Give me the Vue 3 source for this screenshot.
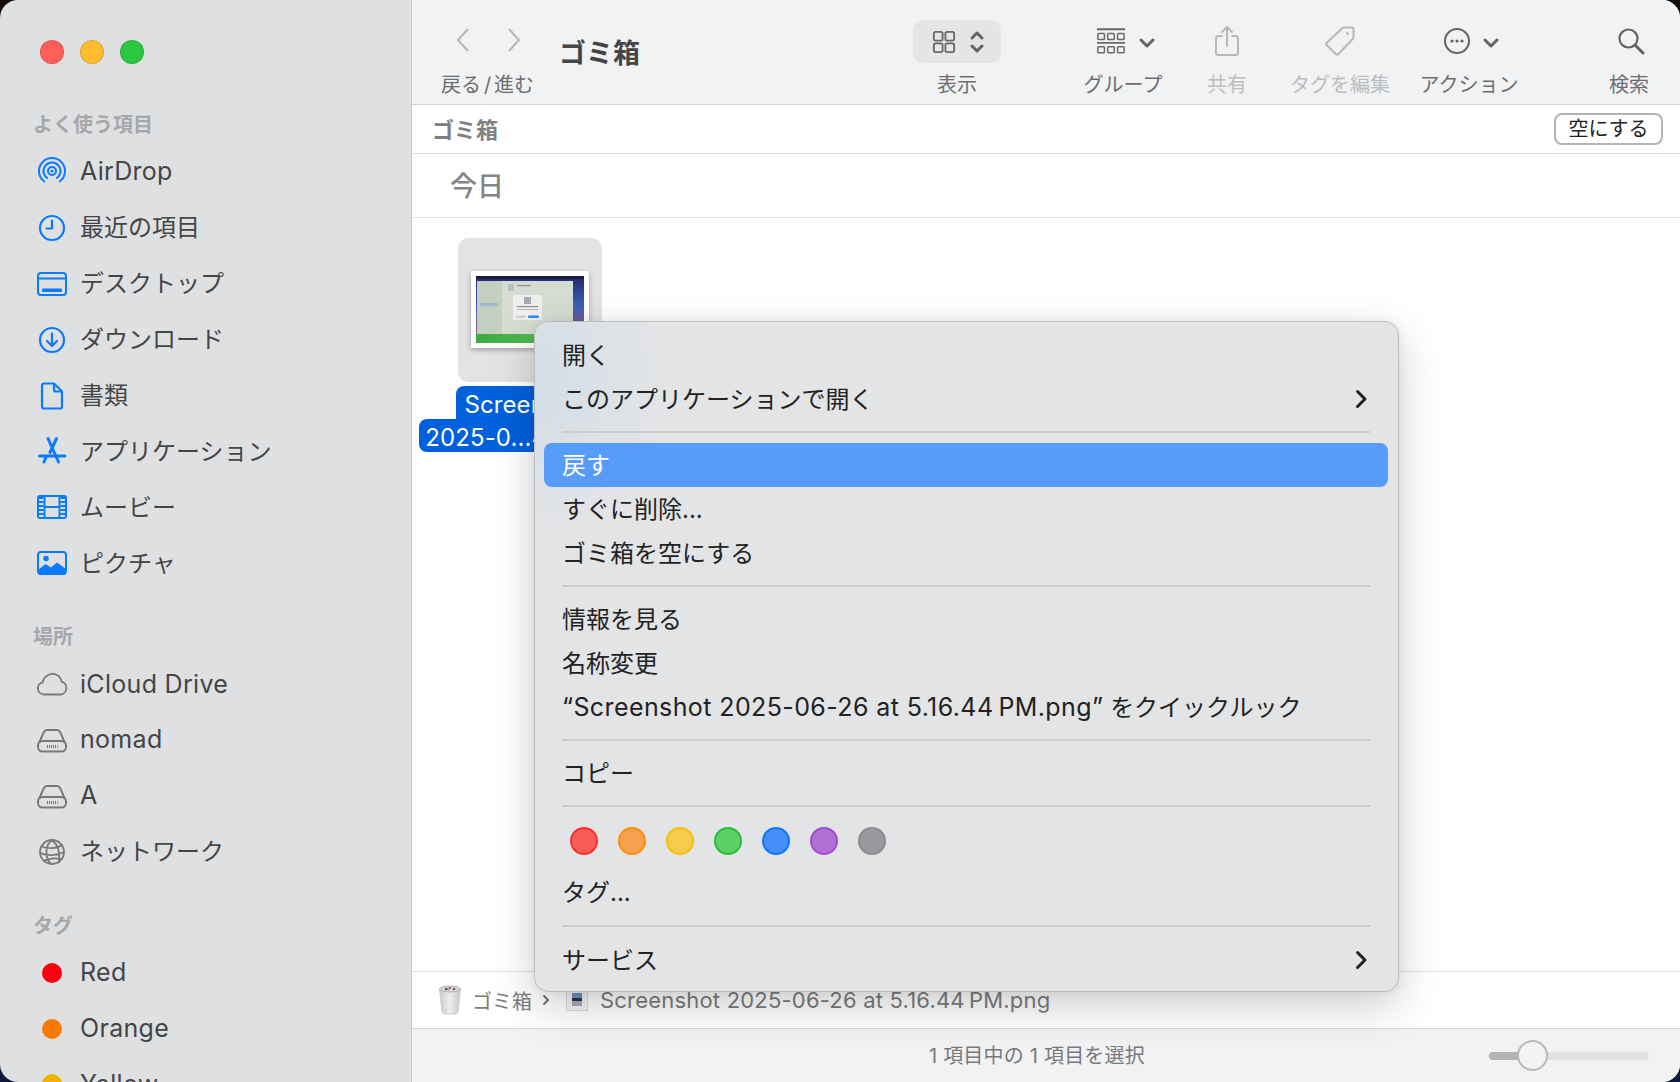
<script setup>
const blue = '#0a7aff'
const grey = '#77787a'
const line = (c, w = 2) => `fill="none" stroke="${c}" stroke-width="${w}" stroke-linecap="round" stroke-linejoin="round"`

const favourites = [
  { label: 'AirDrop', lat: true, svg: `<g ${line(blue)}><path d="M8.3 25.5A13 13 0 1 1 23.7 25.5"/><path d="M11.2 22A8.5 8.5 0 1 1 20.8 22"/><circle cx="16" cy="15" r="4"/></g><circle cx="16" cy="15" r="1.6" fill="${blue}"/>` },
  { label: '最近の項目', svg: `<g ${line(blue, 2.2)}><circle cx="16" cy="16" r="12"/><path d="M16 8.5V16.5H10.5"/></g>` },
  { label: 'デスクトップ', svg: `<g ${line(blue)}><rect x="2" y="5" width="28" height="22" rx="3"/><path d="M2 10.5H30"/></g><rect x="6" y="20.5" width="20" height="3.5" rx="1" fill="${blue}"/>` },
  { label: 'ダウンロード', svg: `<g ${line(blue, 2.2)}><circle cx="16" cy="16" r="12"/><path d="M16 9.5V22M11 17L16 22L21 17"/></g>` },
  { label: '書類', svg: `<path ${line(blue, 2.2)} d="M8 3.5H18L26 11.5V26.5A2 2 0 0 1 24 28.5H8A2 2 0 0 1 6 26.5V5.5A2 2 0 0 1 8 3.5ZM18 3.5V9.5A2 2 0 0 0 20 11.5H26"/>` },
  { label: 'アプリケーション', svg: `<g ${line(blue, 3)}><path d="M12 3.5L22.5 27M20.5 3.5L14 17.5M3.5 21H29M10.5 21L8 27"/></g>` },
  { label: 'ムービー', svg: `<g ${line(blue)}><rect x="2" y="5" width="28" height="22" rx="2"/><path d="M8.5 5V27M23.5 5V27M8.5 16H23.5"/></g><g fill="none" stroke="${blue}" stroke-width="5" stroke-dasharray="2 2"><path d="M5 6V26M27 6V26"/></g>` },
  { label: 'ピクチャ', svg: `<rect x="2" y="5" width="28" height="22" rx="3" ${line(blue)}/><path fill="${blue}" d="M2 23L9.5 17L15 20.5L21 15.5L30 22V25A3 3 0 0 1 27 28H5A3 3 0 0 1 2 25Z"/><circle cx="10" cy="11.5" r="2.8" fill="${blue}"/>` }
]

const drive = `<g ${line(grey)}><path d="M3.5 18L7.8 8.2A3.5 3.5 0 0 1 11 6H21A3.5 3.5 0 0 1 24.2 8.2L28.5 18"/><rect x="2" y="17" width="28" height="10.5" rx="4.5"/></g><path d="M11 22.5H21.5" stroke="${grey}" stroke-width="3" stroke-dasharray="1 1" fill="none"/>`
const places = [
  { label: 'iCloud Drive', lat: true, svg: `<path ${line(grey, 1.8)} d="M8 26.5A6.2 6.2 0 0 1 6.5 14.3C7.6 9.8 11.6 5.8 16.5 5.8C21 5.8 24.6 9 25.6 13.6A6.6 6.6 0 0 1 24.5 26.5Z"/>` },
  { label: 'nomad', lat: true, svg: drive },
  { label: 'A', lat: true, svg: drive },
  { label: 'ネットワーク', svg: `<g ${line(grey, 1.8)}><circle cx="16" cy="16" r="12"/><path d="M16 4C9 9 8.5 21 15 28M16 4C22 9 24 15 23 26.5M5.5 10.5C12 13 21 13 26 9M4 17C11 20 21 20 28 16M8 25C13 22 20 22 26 23"/></g>` }
]
const tags = [
  { label: 'Red', color: '#fe0012' },
  { label: 'Orange', color: '#f97a00' },
  { label: 'Yellow', color: '#efb400' }
]

const menuGroups = [
  [{ t: '開く' }, { t: 'このアプリケーションで開く', sub: true }],
  [{ t: '戻す', active: true }, { t: 'すぐに削除...' }, { t: 'ゴミ箱を空にする' }],
  [{ t: '情報を見る' }, { t: '名称変更' }, { lat: '“Screenshot 2025-06-26 at 5.16.44\u2009PM.png”', t: ' をクイックルック' }],
  [{ t: 'コピー' }]
]
const dots = [
  ['#fb5c59', '#f53331'], ['#f9a04e', '#f98e12'], ['#f6cc4e', '#f7be0a'], ['#5dd065', '#26bf3c'],
  ['#478efb', '#0e76fb'], ['#b06fd4', '#a24fc9'], ['#9a9a9e', '#8b8b8f']
]
</script>

<template>
  <div class="desk">
    <div class="window">
      <aside class="sidebar">
        <div class="lights">
          <span class="light red"></span>
          <span class="light yellow"></span>
          <span class="light green"></span>
        </div>
        <div class="sec-title first">よく使う項目</div>
        <div v-for="r in favourites" :key="r.label" class="row">
          <svg class="row-icon" viewBox="0 0 32 32" v-html="r.svg"></svg>
          <span :class="r.lat ? 'lat' : 'cjk'">{{ r.label }}</span>
        </div>
        <div class="sec-title">場所</div>
        <div v-for="r in places" :key="r.label" class="row">
          <svg class="row-icon" viewBox="0 0 32 32" v-html="r.svg"></svg>
          <span :class="r.lat ? 'lat' : 'cjk'">{{ r.label }}</span>
        </div>
        <div class="sec-title">タグ</div>
        <div v-for="r in tags" :key="r.label" class="row">
          <span class="row-icon tag-wrap"><i class="tag-dot" :style="{ background: r.color }"></i></span>
          <span class="lat">{{ r.label }}</span>
        </div>
      </aside>

      <main class="main">
        <header class="toolbar">
          <div class="tool nav">
            <div class="tool-icon nav-icons">
              <svg width="18" height="28" viewBox="0 0 18 28"><path d="M14 3L4 14L14 25" fill="none" stroke="#b4b5b7" stroke-width="2"/></svg>
              <svg width="18" height="28" viewBox="0 0 18 28"><path d="M4 3L14 14L4 25" fill="none" stroke="#b4b5b7" stroke-width="2"/></svg>
            </div>
            <div class="tool-label nav-label">戻る / 進む</div>
          </div>
          <div class="title">ゴミ箱</div>

          <div class="tool view">
            <div class="tool-icon">
              <div class="view-pill">
                <svg width="24" height="24" viewBox="0 0 26 26" fill="none" stroke="#69696b" stroke-width="2">
                  <rect x="2" y="2" width="9.5" height="9.5" rx="2"/><rect x="14.5" y="2" width="9.5" height="9.5" rx="2"/>
                  <rect x="2" y="14.5" width="9.5" height="9.5" rx="2"/><rect x="14.5" y="14.5" width="9.5" height="9.5" rx="2"/>
                </svg>
                <svg width="16" height="24" viewBox="0 0 16 24" fill="none" stroke="#636365" stroke-width="3" stroke-linecap="round" stroke-linejoin="round">
                  <path d="M3 8L8 3L13 8M3 16L8 21L13 16"/>
                </svg>
              </div>
            </div>
            <div class="tool-label">表示</div>
          </div>

          <div class="tool group">
            <div class="tool-icon with-chev">
              <svg width="30" height="28" viewBox="0 0 32 28" fill="none" stroke="#69696b" stroke-width="1.6">
                <path d="M1 1.5H31M1 16H31" stroke-width="2"/>
                <rect x="2" y="6" width="7" height="6.5" rx="1"/><rect x="12.5" y="6" width="7" height="6.5" rx="1"/><rect x="23" y="6" width="7" height="6.5" rx="1"/>
                <rect x="2" y="20" width="7" height="6.5" rx="1"/><rect x="12.5" y="20" width="7" height="6.5" rx="1"/><rect x="23" y="20" width="7" height="6.5" rx="1"/>
              </svg>
              <svg class="chev" width="16" height="10" viewBox="0 0 16 10"><path d="M2 2L8 8L14 2" fill="none" stroke="#636365" stroke-width="3" stroke-linecap="round" stroke-linejoin="round"/></svg>
            </div>
            <div class="tool-label">グループ</div>
          </div>

          <div class="tool share">
            <div class="tool-icon">
              <svg width="26" height="32" viewBox="0 0 26 32" fill="none" stroke="#b6b7b9" stroke-width="2" stroke-linecap="round" stroke-linejoin="round">
                <path d="M8 11H4.5A2.5 2.5 0 0 0 2 13.5V27.5A2.5 2.5 0 0 0 4.5 30H21.5A2.5 2.5 0 0 0 24 27.5V13.5A2.5 2.5 0 0 0 21.5 11H18M13 21V2M8 7L13 2L18 7"/>
              </svg>
            </div>
            <div class="tool-label dim">共有</div>
          </div>

          <div class="tool tagedit">
            <div class="tool-icon">
              <svg width="32" height="32" viewBox="0 0 32 32" fill="none" stroke="#b6b7b9" stroke-width="2" stroke-linejoin="round">
                <path d="M19 2.5H27.5A2 2 0 0 1 29.5 4.5V13L14.5 29A2 2 0 0 1 11.7 29L3 20.3A2 2 0 0 1 3 17.5Z"/>
                <circle cx="23.5" cy="8.5" r="1.4" fill="#b6b7b9" stroke="none"/>
              </svg>
            </div>
            <div class="tool-label dim">タグを編集</div>
          </div>

          <div class="tool action">
            <div class="tool-icon with-chev action-icons">
              <svg width="28" height="28" viewBox="0 0 28 28" fill="none" stroke="#636365" stroke-width="2">
                <circle cx="14" cy="14" r="12"/>
                <g fill="#636365" stroke="none"><circle cx="9" cy="14" r="1.6"/><circle cx="14" cy="14" r="1.6"/><circle cx="19" cy="14" r="1.6"/></g>
              </svg>
              <svg class="chev" width="16" height="10" viewBox="0 0 16 10"><path d="M2 2L8 8L14 2" fill="none" stroke="#636365" stroke-width="3" stroke-linecap="round" stroke-linejoin="round"/></svg>
            </div>
            <div class="tool-label">アクション</div>
          </div>

          <div class="tool search">
            <div class="tool-icon">
              <svg width="28" height="28" viewBox="0 0 28 28" fill="none" stroke="#636365" stroke-width="2.2" stroke-linecap="round">
                <circle cx="11.5" cy="11.5" r="9"/><path d="M18 18L26 26" stroke-width="3"/>
              </svg>
            </div>
            <div class="tool-label">検索</div>
          </div>
        </header>

        <div class="trash-head">
          <span class="trash-title">ゴミ箱</span>
          <button class="empty-btn" type="button">空にする</button>
        </div>

        <div class="today">今日</div>

        <section class="files">
          <figure class="file">
            <div class="thumb-box">
              <div class="thumb">
                <svg width="108" height="67" viewBox="0 0 108 67">
                  <defs>
                    <linearGradient id="wall" x1="0" y1="0" x2="0" y2="1">
                      <stop offset="0" stop-color="#23276f"/><stop offset="0.45" stop-color="#3a62b6"/><stop offset="1" stop-color="#b0506a"/>
                    </linearGradient>
                    <linearGradient id="grass" x1="0" y1="0" x2="1" y2="0">
                      <stop offset="0" stop-color="#3ea944"/><stop offset="1" stop-color="#63c85a"/>
                    </linearGradient>
                  </defs>
                  <rect width="108" height="67" fill="url(#wall)"/>
                  <rect y="58" width="108" height="9" fill="url(#grass)"/>
                  <rect width="108" height="3" fill="#1c1c3c"/>
                  <rect x="1" y="5" width="96" height="53" fill="#d6dcd2"/>
                  <rect x="1" y="5" width="25" height="53" fill="#c4d0bf"/>
                  <rect x="37" y="19" width="29" height="25" rx="1.5" fill="#efefef"/>
                  <rect x="48" y="21" width="7" height="7" fill="#a6abb0"/>
                  <rect x="41" y="30" width="21" height="1.2" fill="#8a8a8a"/>
                  <rect x="41" y="33" width="21" height="1" fill="#b5b5b5"/>
                  <rect x="40" y="39.5" width="10" height="2.6" rx="1" fill="#cfcfcf"/>
                  <rect x="52" y="39.5" width="11" height="2.6" rx="1" fill="#1f8fff"/>
                  <rect x="32" y="8" width="6" height="7" fill="#bcbfc0"/>
                  <rect x="41" y="9" width="14" height="1.2" fill="#8f938f"/>
                  <rect x="4" y="27" width="18" height="3" fill="#9fb7d0"/>
                </svg>
              </div>
            </div>
            <figcaption class="file-label">
              <span class="lab-line one">Screenshot</span>
              <span class="lab-line two">2025-0...44.png</span>
            </figcaption>
          </figure>
        </section>

        <div class="crumbs">
          <svg class="trash-ic" width="24" height="30" viewBox="0 0 24 30">
            <defs><linearGradient id="bin" x1="0" y1="0" x2="1" y2="0"><stop offset="0" stop-color="#c8c9ca"/><stop offset="0.5" stop-color="#efefef"/><stop offset="1" stop-color="#c2c3c4"/></linearGradient></defs>
            <path d="M1.5 4L4 27A3 3 0 0 0 7 29H17A3 3 0 0 0 20 27L22.5 4Z" fill="url(#bin)" stroke="#cfcfcf"/>
            <ellipse cx="12" cy="4" rx="10.5" ry="3" fill="#d8d8d8" stroke="#b4b4b4"/>
            <g fill="#555"><circle cx="8" cy="4" r="1.2"/><circle cx="12" cy="3" r="1"/><circle cx="16" cy="4" r="1.2"/></g>
            <circle cx="10" cy="4.5" r="0.9" fill="#c44"/>
          </svg>
          <span class="crumb-name">ゴミ箱</span>
          <svg class="crumb-sep" width="10" height="14" viewBox="0 0 10 14"><path d="M2.5 2.5L7 7L2.5 11.5" fill="none" stroke="#707072" stroke-width="2"/></svg>
          <svg class="doc-ic" width="22" height="20" viewBox="0 0 22 20">
            <rect x="0.5" y="0.5" width="21" height="19" fill="#f4f4f5" stroke="#dcdcdc"/>
            <rect x="6" y="2" width="10" height="5" fill="#6d8fc9"/>
            <rect x="6" y="7" width="10" height="3" fill="#2b3550"/>
            <rect x="6" y="10" width="10" height="5" fill="#a8acb2"/>
          </svg>
          <span class="crumb-file">Screenshot 2025-06-26 at 5.16.44&#8201;PM.png</span>
        </div>

        <footer class="status">
          <span class="status-text">1 項目中の 1 項目を選択</span>
          <div class="slider">
            <div class="slider-fill"></div>
            <div class="slider-thumb"></div>
          </div>
        </footer>
      </main>

      <div class="menu">
        <template v-for="(g, i) in menuGroups" :key="i">
          <div v-for="it in g" :key="it.t" class="menu-item" :class="{ active: it.active }">
            <span class="menu-text"><span v-if="it.lat" class="menu-lat">{{ it.lat }}</span>{{ it.t }}</span>
            <svg v-if="it.sub" width="13" height="20" viewBox="0 0 13 20"><path d="M2.5 2.5L10 10L2.5 17.5" fill="none" stroke="#222" stroke-width="3" stroke-linecap="round" stroke-linejoin="round"/></svg>
          </div>
          <div class="menu-sep"></div>
        </template>
        <div class="dots">
          <i v-for="d in dots" :key="d[0]" class="dot" :style="{ background: d[0], borderColor: d[1] }"></i>
        </div>
        <div class="menu-item"><span class="menu-text">タグ...</span></div>
        <div class="menu-sep tail"></div>
        <div class="menu-item">
          <span class="menu-text">サービス</span>
          <svg width="13" height="20" viewBox="0 0 13 20"><path d="M2.5 2.5L10 10L2.5 17.5" fill="none" stroke="#222" stroke-width="3" stroke-linecap="round" stroke-linejoin="round"/></svg>
        </div>
      </div>
    </div>
  </div>
</template>

<style>
html, body { margin: 0; padding: 0; background: #10141f; }
</style>

<style scoped>
.desk {
  width: 1680px;
  height: 1082px;
  overflow: hidden;
  background: linear-gradient(to bottom, #140d08 50%, #0d1a3c 50%);
  font-family: Inter, "Noto Sans CJK JP", sans-serif;
}
.window {
  position: relative;
  display: flex;
  width: 1680px;
  height: 1082px;
  border-radius: 18px;
  overflow: hidden;
}
.sidebar {
  width: 412px;
  height: 1082px;
  flex: none;
  box-sizing: border-box;
  overflow: hidden;
  background: #dfe0e2;
  border-right: 1px solid #c9c9ca;
  padding-top: 40px;
}
.lights { display: flex; gap: 16px; padding-left: 40px; height: 24px; margin-bottom: 42px; }
.light { width: 24px; height: 24px; box-sizing: border-box; border-radius: 50%; border: 1px solid rgba(0,0,0,.12); }
.light.red { background: #ff5f57; }
.light.yellow { background: #febc2e; }
.light.green { background: #28c840; }
.sec-title {
  height: 38px;
  line-height: 38px;
  margin-top: 27px;
  padding-left: 33px;
  font-size: 20px;
  font-weight: 700;
  color: #a6a7a9;
}
.sec-title.first { margin-top: 0; }
.row {
  display: flex;
  align-items: center;
  height: 55.9px;
  font-size: 24px;
  color: #444547;
}
.row-icon { width: 32px; height: 32px; margin-left: 36px; margin-right: 12px; flex: none; }
.lat { font-size: 25px; letter-spacing: .3px; padding-bottom: 1px; }
.cjk { padding-bottom: 4px; }
.tag-wrap { display: flex; align-items: center; justify-content: center; }
.tag-dot { width: 20px; height: 20px; border-radius: 50%; }

.main { flex: 1; display: flex; flex-direction: column; min-width: 0; background: #fff; }
.toolbar {
  height: 104px;
  flex: none;
  display: flex;
  background: #f1f2f4;
  border-bottom: 1px solid #d3d3d4;
  padding-left: 25px;
}
.tool { display: flex; flex-direction: column; align-items: center; padding-top: 20px; flex: none; }
.tool-icon { height: 43px; display: flex; align-items: center; justify-content: center; }
.tool-label { margin-top: 8px; font-size: 20px; line-height: 28px; color: #6c6d6f; white-space: nowrap; }
.tool-label.dim { color: #bcbdbf; }
.nav { width: 100px; }
.nav-icons { gap: 33px; padding: 0 0 3px 3px; box-sizing: border-box; }
.nav-label { word-spacing: -2.8px; padding-left: 1px; }
.title { margin-left: 22px; padding-top: 35px; font-size: 27px; line-height: 38px; font-weight: 700; color: #454547; width: 81px; white-space: nowrap; }
.view { width: 100px; margin-left: 267px; }
.view-pill { width: 88px; height: 43px; background: #e4e5e7; border-radius: 10px; display: flex; align-items: center; justify-content: center; gap: 13px; box-sizing: border-box; padding-left: 3px; }
.with-chev { gap: 13px; padding: 0 0 1px 5px; box-sizing: border-box; }
.action-icons { gap: 12px; padding-left: 3px; }
.chev { margin-top: 3px; }
.group { width: 96px; margin-left: 68px; }
.share { width: 60px; margin-left: 26px; }
.share .tool-icon, .tagedit .tool-icon, .search .tool-icon { padding-bottom: 2px; box-sizing: border-box; }
.search .tool-icon { padding-left: 3px; }
.tagedit { width: 110px; margin-left: 28px; }
.action { width: 110px; margin-left: 19px; }
.search { width: 60px; margin-left: 75px; }

.trash-head {
  height: 48px;
  flex: none;
  box-sizing: content-box;
  display: flex;
  align-items: center;
  justify-content: space-between;
  border-bottom: 1.5px solid #dedede;
  padding: 0 17px 0 20px;
}
.trash-title { font-size: 22px; font-weight: 700; color: #808082; padding-bottom: 2px; }
.empty-btn {
  width: 109px;
  height: 32px;
  box-sizing: border-box;
  border: 2px solid #b4b4b6;
  border-radius: 8px;
  background: #fff;
  color: #222;
  font-family: inherit;
  font-size: 20px;
  line-height: 24px;
  padding: 0;
}
.today {
  height: 63px;
  flex: none;
  line-height: 66px;
  padding-left: 38px;
  font-size: 27px;
  font-weight: 500;
  color: #858587;
  border-bottom: 1.5px solid #e2e2e2;
}
.files { flex: 1; min-height: 0; border-bottom: 1.5px solid #e0e0e0; position: relative; }
.file { margin: 0 0 0 6px; padding-top: 20px; width: 224px; display: flex; flex-direction: column; align-items: center; }
.thumb-box {
  width: 144px;
  height: 144px;
  border-radius: 10px;
  background: #e3e3e3;
  display: flex;
  align-items: center;
  justify-content: center;
}
.thumb {
  width: 108px;
  height: 67px;
  padding: 5px;
  background: #fff;
  box-shadow: 0 2px 5px rgba(0,0,0,.3);
  margin-top: -2px;
  line-height: 0;
}
.file-label { margin-top: 4px; display: flex; flex-direction: column; align-items: center; color: #fff; font-size: 24px; letter-spacing: .1px; font-weight: 400; }
.lab-line { background: #0061dc; white-space: nowrap; height: 33px; line-height: 37px; box-sizing: border-box; }
.lab-line.one { border-radius: 8px 8px 0 0; padding: 0 9px 0 8px; }
.lab-line.two { border-radius: 8px; padding: 0 28px 0 6px; }

.crumbs {
  height: 56px;
  flex: none;
  display: flex;
  align-items: center;
  padding-left: 26px;
  font-size: 22px;
  color: #7c7c7e;
  border-bottom: 1.5px solid #d6d6d7;
}
.crumb-name { margin-left: 10px; font-size: 20px; }
.crumb-sep { margin-left: 9px; }
.doc-ic { margin-left: 15px; margin-top: 2px; }
.crumb-file { margin-left: 12px; white-space: nowrap; letter-spacing: .2px; }
.status {
  flex: none;
  height: 53px;
  position: relative;
  display: flex;
  align-items: center;
  background: #f1f2f4;
}
.status-text { position: relative; margin-left: 517px; padding-bottom: 2px; font-size: 20px; letter-spacing: .2px; color: #77787a; white-space: nowrap; }
.slider {
  position: absolute;
  left: 1077px;
  top: 23px;
  width: 160px;
  height: 8px;
  border-radius: 4px;
  background: #e0e1e3;
}
.slider-fill { width: 34px; height: 8px; background: #b3b3b5; border-radius: 4px 0 0 4px; }
.slider-thumb {
  position: absolute;
  left: 28px;
  top: -12px;
  width: 31px;
  height: 31px;
  box-sizing: border-box;
  border: 2px solid #b9b9bb;
  border-radius: 50%;
  background: #f3f4f6;
}

.menu {
  position: absolute;
  left: 534px;
  top: 321px;
  width: 865px;
  height: 671px;
  box-sizing: border-box;
  padding: 11px 10px 10px 9px;
  border: 1px solid #bdbdbe;
  border-radius: 14px;
  background: radial-gradient(130px 150px at 0 60px, #d2dee6, rgba(227,228,230,0)), #e3e4e6;
  box-shadow: 0 14px 44px rgba(0,0,0,.2), 0 0 8px rgba(0,0,0,.06);
  font-size: 24px;
  color: #222;
}
.menu-item {
  height: 44px;
  display: flex;
  align-items: center;
  justify-content: space-between;
  padding: 0 20px 0 18px;
  border-radius: 8px;
  white-space: nowrap;
}
.menu-text { padding-bottom: 4px; }
.menu-lat { font-size: 25px; letter-spacing: .4px; }
.menu-item.active { background: #579cfb; color: #fff; }
.menu-sep { height: 2px; margin: 10px 18px; background: #cbcccd; }
.menu-sep.tail { margin: 11px 18px; }
.dots { height: 53px; display: flex; align-items: center; gap: 20px; padding: 0 0 5px 26px; box-sizing: border-box; }
.dot { width: 28px; height: 28px; box-sizing: border-box; border-radius: 50%; border: 2.5px solid; }
</style>
